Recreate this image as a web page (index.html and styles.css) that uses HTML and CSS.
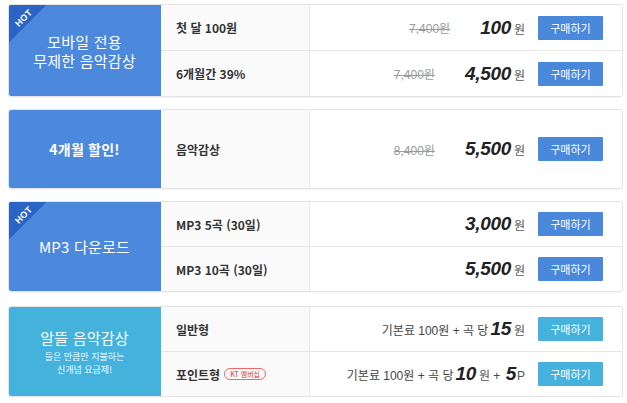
FILE: index.html
```html
<!DOCTYPE html>
<html lang="ko">
<head>
<meta charset="utf-8">
<link rel="stylesheet" href="styles.css">
</head>
<body>
<div class="list">
  <div class="card c1">
    <div class="side blue">
      <span class="hot"><span>HOT</span></span>
      <div class="title">모바일 전용<br>무제한 음악감상</div>
    </div>
    <div class="rows">
      <div class="row">
        <div class="name">첫 달 100원</div>
        <div class="price">
          <span class="old">7,400원</span>
          <span class="now"><b>100</b><i>원</i></span>
          <button class="buy">구매하기</button>
        </div>
      </div>
      <div class="row">
        <div class="name">6개월간 39%</div>
        <div class="price">
          <span class="old">7,400원</span>
          <span class="now"><b>4,500</b><i>원</i></span>
          <button class="buy">구매하기</button>
        </div>
      </div>
    </div>
  </div>

  <div class="card c2">
    <div class="side blue">
      <div class="title bold">4개월 할인!</div>
    </div>
    <div class="rows">
      <div class="row">
        <div class="name">음악감상</div>
        <div class="price">
          <span class="old">8,400원</span>
          <span class="now"><b>5,500</b><i>원</i></span>
          <button class="buy">구매하기</button>
        </div>
      </div>
    </div>
  </div>

  <div class="card c3">
    <div class="side blue">
      <span class="hot"><span>HOT</span></span>
      <div class="title">MP3 다운로드</div>
    </div>
    <div class="rows">
      <div class="row">
        <div class="name">MP3 5곡 (30일)</div>
        <div class="price">
          <span class="now"><b>3,000</b><i>원</i></span>
          <button class="buy">구매하기</button>
        </div>
      </div>
      <div class="row">
        <div class="name">MP3 10곡 (30일)</div>
        <div class="price">
          <span class="now"><b>5,500</b><i>원</i></span>
          <button class="buy">구매하기</button>
        </div>
      </div>
    </div>
  </div>

  <div class="card c4">
    <div class="side sky">
      <div class="title">알뜰 음악감상</div>
      <div class="sub">들은 만큼만 지불하는<br>신개념 요금제!</div>
    </div>
    <div class="rows">
      <div class="row">
        <div class="name">일반형</div>
        <div class="price">
          <span class="plain">기본료 100원 + 곡 당<b>15</b><i>원</i></span>
          <button class="buy sky">구매하기</button>
        </div>
      </div>
      <div class="row">
        <div class="name">포인트형 <span class="kt">KT 멤버십</span></div>
        <div class="price">
          <span class="plain">기본료 100원 + 곡 당<b>10</b><i>원</i> + <b>5</b><i class="p">P</i></span>
          <button class="buy sky">구매하기</button>
        </div>
      </div>
    </div>
  </div>
</div>
</body>
</html>
```
FILE: styles.css
```css
* { box-sizing: border-box; }
body {
  margin: 0;
  background: #fff;
  font-family: "Noto Sans CJK KR", "Noto Sans", sans-serif;
}
.list {
  padding: 4px 4px 0 8px;
  display: flex;
  flex-direction: column;
  gap: 12px;
}
.card {
  display: flex;
  width: 615px;
  border: 1px solid #e4e4e4;
  border-radius: 3px;
  overflow: hidden;
  box-shadow: 0 1px 1px rgba(0,0,0,0.04);
}
.c1 { height: 93px; }
.c2 { height: 80px; }
.c3 { height: 91px; }
.c4 { height: 91px; margin-top: 2px; }
.side {
  position: relative;
  width: 153px;
  flex: none;
  margin: -1px 0 -1px -1px;
  display: flex;
  flex-direction: column;
  align-items: center;
  justify-content: center;
  color: #fff;
  text-align: center;
  overflow: hidden;
}
.side.blue { background: #4c89dd; }
.side.sky { background: #45b2dd; }
.title {
  font-size: 15px;
  line-height: 19px;
  letter-spacing: 0.2px;
}
.title.bold { font-weight: bold; font-size: 14px; }
.sub {
  font-size: 9px;
  line-height: 13px;
  margin-top: 3px;
  opacity: 0.95;
}
.hot {
  position: absolute;
  left: 0;
  top: 0;
  width: 40px;
  height: 40px;
  background: linear-gradient(135deg, #2c64c6 50%, transparent 50%);
}
.hot span {
  position: absolute;
  left: 2px;
  top: 10px;
  width: 28px;
  text-align: center;
  font-family: "Liberation Sans", sans-serif;
  font-weight: bold;
  font-size: 9px;
  line-height: 9px;
  letter-spacing: 0.3px;
  transform: rotate(-45deg);
}
.rows {
  flex: 1;
  display: flex;
  flex-direction: column;
}
.row {
  flex: 1;
  display: flex;
  border-top: 1px solid #e6e6e6;
}
.row:first-child { border-top: 0; }
.name {
  width: 149px;
  flex: none;
  background: #fafafa;
  border-right: 1px solid #e8e8e8;
  padding-left: 15px;
  display: flex;
  align-items: center;
  font-size: 12px;
  font-weight: bold;
  color: #333;
}
.price {
  flex: 1;
  display: flex;
  align-items: center;
  justify-content: flex-end;
  padding-right: 19px;
  font-family: "Liberation Sans", "Noto Sans CJK KR", sans-serif;
  color: #444;
}
.old {
  font-size: 12px;
  color: #9a9a9a;
  text-decoration: line-through;
  margin-right: 30px;
}
.now b, .plain b {
  font-size: 19px;
  font-style: italic;
  font-weight: bold;
  color: #222;
  letter-spacing: -0.3px;
}
.now i, .plain i {
  font-style: normal;
  font-size: 12px;
  color: #555;
  margin-left: 3px;
}
.plain i.p { margin-left: 1px; }
.plain {
  font-size: 12px;
  color: #444;
}
.plain b { margin-left: 2px; }
.buy {
  margin-left: 13px;
  width: 65px;
  height: 24px;
  border: 0;
  border-radius: 1px;
  background: #4a88dc;
  color: #fff;
  font-family: "Noto Sans CJK KR", sans-serif;
  font-size: 11px;
  padding: 0;
}
.buy.sky { background: #45b2dd; }
.kt {
  display: inline-block;
  margin-left: 4px;
  border: 1px solid #e66;
  border-radius: 7px;
  color: #d33;
  font-size: 7px;
  font-weight: normal;
  line-height: 10px;
  padding: 0 5px;
}
```
